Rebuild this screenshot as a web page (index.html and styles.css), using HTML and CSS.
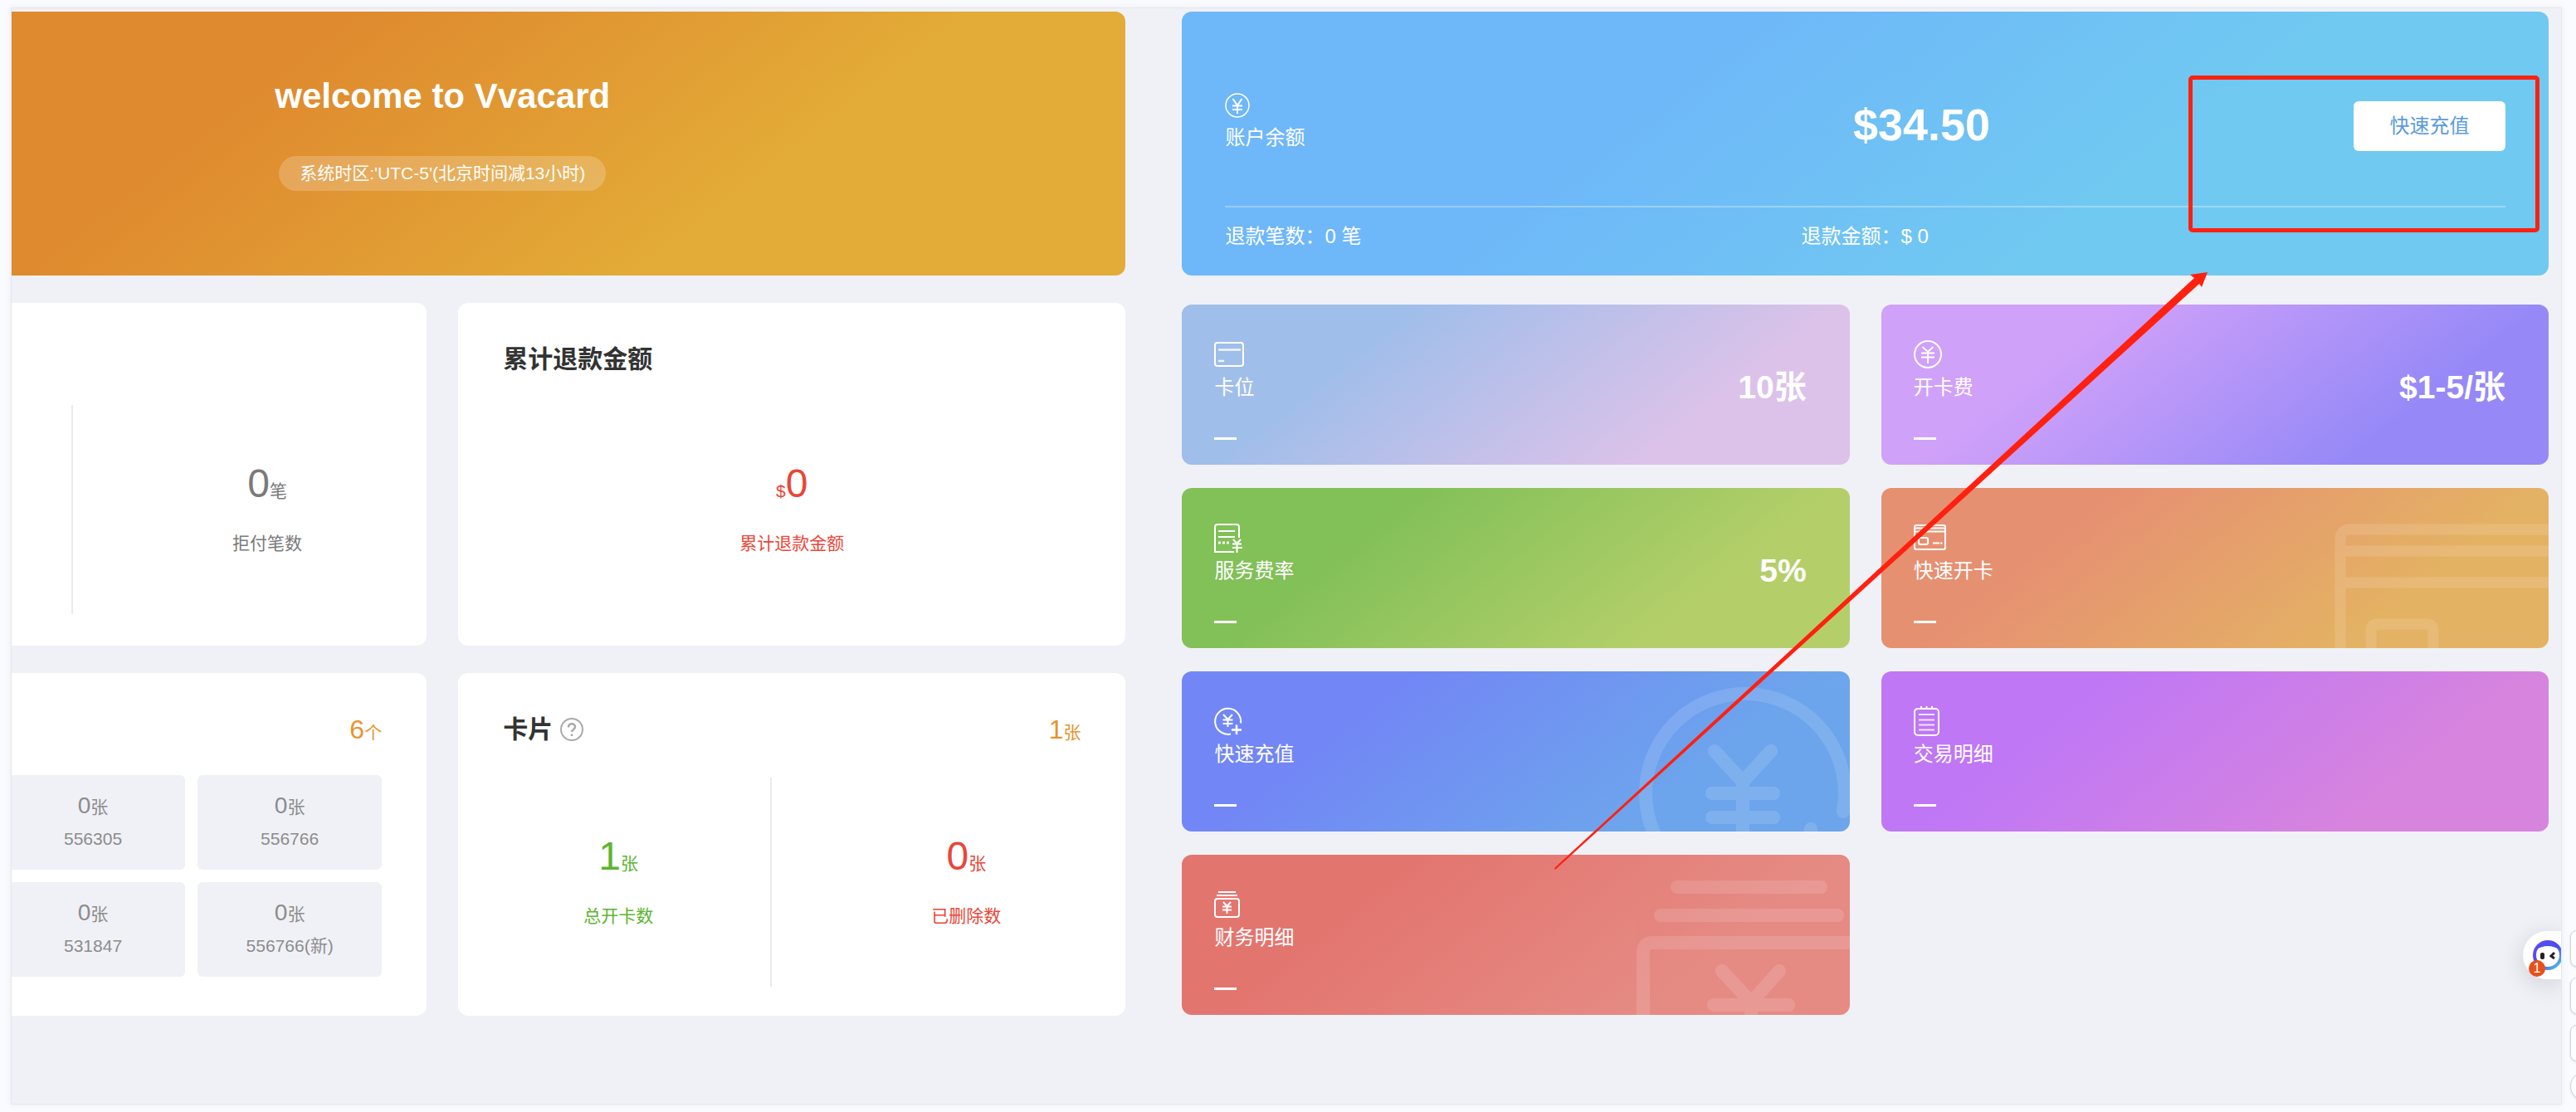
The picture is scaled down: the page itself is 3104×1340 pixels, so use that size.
FILE: index.html
```html
<!DOCTYPE html>
<html lang="zh-CN">
<head>
<meta charset="utf-8">
<title>Vvacard</title>
<link rel="stylesheet" href="styles.css">
</head>
<body>
<main class="frame">
  <section class="left">
    <header class="welcome">
      <h1>welcome to Vvacard</h1>
      <p class="zone">系统时区:'UTC-5'(北京时间减13小时)</p>
    </header>
    <div class="row">
      <article class="card cut">
        <div class="head"></div>
        <div class="stats">
          <div class="stat first"></div>
          <div class="stat second gray"><p class="num">0<small>笔</small></p><p class="cap">拒付笔数</p></div>
        </div>
      </article>
      <article class="card">
        <div class="head"><h2>累计退款金额</h2></div>
        <div class="stats single">
          <div class="stat red"><p class="num"><small>$</small>0</p><p class="cap">累计退款金额</p></div>
        </div>
      </article>
    </div>
    <div class="row">
      <article class="card cut">
        <div class="head"><span class="total">6<small>个</small></span></div>
        <div class="bins">
          <div class="bin"><p class="count">0<small>张</small></p><p>556305</p></div>
          <div class="bin"><p class="count">0<small>张</small></p><p>556766</p></div>
          <div class="bin"><p class="count">0<small>张</small></p><p>531847</p></div>
          <div class="bin"><p class="count">0<small>张</small></p><p>556766(新)</p></div>
        </div>
      </article>
      <article class="card">
        <div class="head tall">
          <h2>卡片</h2>
          <svg class="help" width="28" height="28" viewBox="0 0 28 28" fill="none" stroke="#aaa" stroke-width="2"><circle cx="14" cy="14" r="13"/><path d="M10 11.500c0-5.500 8-5.500 8-.5 0 3-4 3-4 6" stroke-width="2.500"/><path d="M14 19.500v2.500" stroke-width="2.500"/></svg>
          <span class="total">1<small>张</small></span>
        </div>
        <div class="stats">
          <div class="stat first green"><p class="num">1<small>张</small></p><p class="cap">总开卡数</p></div>
          <div class="stat second red"><p class="num">0<small>张</small></p><p class="cap">已删除数</p></div>
        </div>
      </article>
    </div>
  </section>

  <section class="right">
    <article class="balance">
      <div class="upper">
        <div class="account">
          <svg width="30" height="30" viewBox="0 0 30 30" fill="none" stroke="currentColor" stroke-width="1.500"><circle cx="15" cy="15" r="14"/><path d="M9.500 7l5.500 8 5.500-8M9 15.500h12M9 20h12M15 15v10" stroke-width="2"/></svg>
          <span>账户余额</span>
        </div>
        <strong class="amount">$34.50</strong>
        <button type="button" class="recharge">快速充值</button>
      </div>
      <div class="lower"><span>退款笔数：0 笔</span><span>退款金额：$ 0</span></div>
      <div class="mark"></div>
    </article>

    <div class="tiles">
      <article class="tile sky">
        <svg class="icon" viewBox="0 0 39 36" fill="none" stroke="currentColor"><rect x="1" y="4" width="34" height="28" rx="3" stroke-width="2"/><path d="M6 12.500h25M6 26h5" stroke-width="2.500" stroke-linecap="round" opacity=".85"/></svg>
        <span class="name">卡位</span><strong class="value">10张</strong>
      </article>
      <article class="tile violet">
        <svg class="icon" viewBox="0 0 39 36" fill="none" stroke="currentColor"><circle cx="17" cy="18" r="16" stroke-width="2"/><path d="M10.500 9l6.500 6 6.500-6M9 16.500h16M9 21.500h16M17 15v14" stroke-width="2"/></svg>
        <span class="name">开卡费</span><strong class="value">$1-5/张</strong>
      </article>
      <article class="tile lime">
        <svg class="icon" viewBox="0 0 39 36" fill="none" stroke="currentColor" stroke-width="2"><path d="M24 35H1V5q0-3 3-3h23q3 0 3 3v13"/><path d="M5 10h20M5 17h20"/><path d="M5 24h3M10 24h3M15 24h3" stroke-width="3"/><path d="M23 20l4.500 5 4.500-5M22 25.500h11M22 30h12M27.500 25v11"/></svg>
        <span class="name">服务费率</span><strong class="value">5%</strong>
      </article>
      <a class="tile amber" href="#open">
        <svg class="water" viewBox="0 0 260 193" width="260" height="193" fill="none" stroke="#fff" stroke-width="13"><path d="M9 210V62q0-12 12-12h260M15 76h260M15 114h260M46 210v-38q0-8 8-8h59q8 0 8 8v38"/></svg>
        <svg class="icon" viewBox="0 0 39 36" fill="none" stroke="currentColor" stroke-width="2"><rect x="1" y="3" width="37" height="29" rx="2"/><path d="M2 6.500h35M2 10.500h35" stroke-width="2"/><rect x="6" y="18" width="11" height="8" rx="2"/><path d="M23 24.500h8M32 24.500h2.500"/></svg>
        <span class="name">快速开卡</span>
      </a>
      <a class="tile blue" href="#recharge">
        <svg class="water" viewBox="0 0 260 193" width="260" height="193" fill="none" stroke="#fff" stroke-width="16" stroke-linecap="round" stroke-linejoin="round"><path d="M252 169A120 120 0 1 0 131 267M97 96l34 37 34-37M131 133v70M94 147h74M94 176h74M213 190v40"/></svg>
        <svg class="icon" viewBox="0 0 39 36" fill="none" stroke="currentColor" stroke-width="2"><path d="M32 20.500A15.500 15.500 0 1 0 20 33.500"/><path d="M11 10l5.500 6 5.500-6M10.500 16.500h12M10.500 21h12M16.500 16v9"/><path d="M21 28.500h12M27 22.500v11.500" stroke-width="2.500"/></svg>
        <span class="name">快速充值</span>
      </a>
      <a class="tile purple" href="#trades">
        <svg class="icon" viewBox="0 0 39 36" fill="none" stroke="currentColor" stroke-width="2"><rect x="1" y="3" width="29" height="32" rx="4"/><path d="M9 0v4M15.500 0v4M22 0v4"/><path d="M6 10h19M6 16.500h19M6 22.500h19M6 28.500h19" opacity=".8"/></svg>
        <span class="name">交易明细</span>
      </a>
      <a class="tile coral" href="#finance">
        <svg class="water" viewBox="0 0 260 193" width="260" height="193" fill="none" stroke="#fff" stroke-width="16" stroke-linecap="round" stroke-linejoin="round"><path d="M52 39h173M32 73h213M11 220V118q0-12 12-12h250M106 140l35 38 34-38M141 178v40M96 181h90"/></svg>
        <svg class="icon" viewBox="0 0 39 36" fill="none" stroke="currentColor" stroke-width="2"><path d="M5 3h21M3 7h25"/><rect x="1" y="11" width="29" height="22" rx="3"/><path d="M11 15l4.500 5 4.500-5M10 20.500h11M10 24.500h11M15.500 20v9"/></svg>
        <span class="name">财务明细</span>
      </a>
    </div>
    <svg class="arrow" width="788" height="720" viewBox="0 0 788 720"><path d="M0 718L771 7l-5-4L787 0l-7 18-3-4L1 720z" fill="#ff2010"/></svg>
  </section>

  <div class="chat">
    <svg width="36" height="36" viewBox="0 0 36 36"><defs><linearGradient id="ring" x1="0" y1="0" x2="1" y2="1"><stop offset="0" stop-color="#6a50f0"/><stop offset=".5" stop-color="#4a48f0"/><stop offset="1" stop-color="#50d0e0"/></linearGradient></defs><circle cx="18" cy="18" r="16" fill="#fff" stroke="url(#ring)" stroke-width="4"/><path d="M3 12A16 16 0 0 1 33 12Q18 2 3 12" fill="#4f4cf0"/><rect x="9" y="15" width="5" height="8" rx="2" fill="#222"/><path d="M26 15l-4 4 4 3" fill="none" stroke="#222" stroke-width="3"/></svg>
    <span class="badge">1</span>
  </div>
</main>
<aside class="rail">
  <i class="slot"></i><i class="slot"></i><i class="slot"></i><i class="slot round"></i>
</aside>
</body>
</html>
```
FILE: styles.css
```css
* { box-sizing: border-box; }
body {
  margin: 0;
  min-height: 100vh;
  padding: 10px 0 10px 14px;
  display: flex;
  overflow: hidden;
  background: #fafbff;
  color: #333;
  font: 21px/30px "Liberation Sans", "Noto Sans CJK SC", sans-serif;
}
h1, h2, p { margin: 0; }
small { font-size: 21px; line-height: 1; }
a { color: inherit; text-decoration: none; }

.frame {
  position: relative;
  flex: 1;
  display: grid;
  grid-template-columns: 1342fr 1646fr;
  column-gap: 68px;
  align-items: start;
  padding: 4px 15px 0 0;
  overflow: hidden;
  background: #f0f1f6;
  box-shadow: 0 0 0 1px #e6e7eb, 0 0 8px 2px rgba(0, 0, 0, .05);
}

.left { display: flex; flex-direction: column; gap: 33px; }
.welcome {
  min-height: 318px;
  display: flex;
  flex-direction: column;
  align-items: center;
  padding: 72px 304px 0 0;
  border-radius: 0 12px 12px 0;
  background: linear-gradient(142deg, #df8a2f 24%, #e3ab37 66%);
  color: #fff;
}
.welcome h1 { font-size: 42px; line-height: 60px; }
.zone {
  margin-top: 42px;
  padding: 0 25px;
  line-height: 42px;
  border-radius: 21px;
  background: rgba(255, 255, 255, .2);
}

.row { display: grid; grid-template-columns: 500fr 804fr; column-gap: 38px; }
.card {
  min-height: 413px;
  padding: 45px 0 0;
  overflow: hidden;
  border-radius: 12px;
  background: #fff;
}
.card.cut { border-radius: 0 12px 12px 0; }
.head {
  display: flex;
  align-items: center;
  gap: 9px;
  height: 45px;
  margin: 0 54px 33px;
}
.head.tall { margin-bottom: 36px; }
.head h2 { font-size: 30px; line-height: 45px; }
.total { margin-left: auto; font-size: 32px; color: #e6942f; }

.stats { display: flex; height: 252px; }
.stat {
  flex: 1;
  display: flex;
  flex-direction: column;
  align-items: center;
  justify-content: center;
  gap: 27px;
  padding-bottom: 6px;
}
.stat.first { flex: 0 0 376px; padding-left: 10px; }
.stat.second { padding-left: 42px; border-left: 2px solid #ebebed; }
.cut .stat.first { flex-basis: 72px; }
.num { font-size: 48px; line-height: 60px; }
.gray { color: #7a7a7a; }
.red { color: #e84738; }
.green { color: #5cb531; }

.bins {
  display: grid;
  grid-template-columns: 1fr 1fr;
  gap: 15px;
  margin: 0 54px 0 -13px;
}
.bin {
  min-height: 114px;
  padding-top: 17px;
  border-radius: 6px;
  background: #f0f1f6;
  color: #8c8c8c;
  text-align: center;
  line-height: 40px;
}
.count { font-size: 28px; }

.right {
  position: relative;
  display: flex;
  flex-direction: column;
  gap: 35px;
  color: #fff;
  font-size: 24px;
  line-height: 36px;
}
.balance {
  position: relative;
  min-height: 318px;
  padding: 0 52px;
  border-radius: 12px;
  background: linear-gradient(142deg, #6eb7f9 33%, #70c9f1 68%);
}
.upper {
  display: grid;
  grid-template-columns: 45% 290px 1fr;
  align-items: center;
  height: 236px;
  padding-top: 42px;
  border-bottom: 2px solid rgba(255, 255, 255, .3);
}
.account { display: flex; flex-direction: column; gap: 6px; padding-bottom: 8px; }
.amount { padding-bottom: 4px; font-size: 54px; line-height: 60px; text-align: center; }
.recharge {
  justify-self: end;
  width: 183px;
  height: 60px;
  border: 0;
  border-radius: 6px;
  background: #fff;
  color: #5b9bdb;
  font: inherit;
}
.lower { display: grid; grid-template-columns: 45% 1fr; padding-top: 17px; }
.mark {
  position: absolute;
  top: 77px;
  right: 11px;
  width: 423px;
  height: 189px;
  border: 5px solid #ff2010;
  border-radius: 5px;
}

.tiles { display: grid; grid-template-columns: 1fr 1fr; gap: 28px 38px; }
.tile {
  position: relative;
  display: grid;
  grid-template-columns: auto 1fr;
  grid-template-rows: 36px 44px 38px 3px;
  column-gap: 20px;
  min-height: 193px;
  padding: 42px 52px 0 39px;
  overflow: hidden;
  border-radius: 12px;
}
.tile::after { content: ""; grid-area: 4 / 1; width: 27px; background: #fff; }
.icon { grid-area: 1 / 1; width: 39px; height: 36px; }
.name { grid-area: 2 / 1; line-height: 44px; }
.value { grid-area: 2 / 2; font-size: 39px; line-height: 44px; text-align: right; }
.water { position: absolute; top: 0; right: 0; opacity: .12; }
.sky { background: linear-gradient(142deg, #a0beea 27%, #dcc2e9 76%); }
.violet { background: linear-gradient(142deg, #d0a1f9 27%, #9689f7 76%); }
.lime { background: linear-gradient(142deg, #82c058 27%, #b4cf6a 76%); }
.amber { background: linear-gradient(142deg, #e69072 27%, #e4b264 76%); }
.blue { background: linear-gradient(142deg, #7287f5 27%, #6da6ec 76%); }
.purple { background: linear-gradient(142deg, #bf77f5 27%, #d784de 76%); }
.coral { background: linear-gradient(142deg, #e3756f 27%, #e58b84 76%); }
.arrow { position: absolute; top: 314px; left: 449px; }

.chat {
  position: absolute;
  top: 1112px;
  right: 0;
  width: 46px;
  height: 58px;
  padding: 11px 0 0 12px;
  border-radius: 29px 0 0 29px;
  background: #fff;
  box-shadow: 0 6px 30px rgba(0, 0, 0, .14);
}
.chat svg { display: block; }
.badge {
  position: absolute;
  top: 35px;
  left: 7px;
  width: 20px;
  height: 20px;
  border-radius: 10px;
  background: #e8501b;
  color: #fff;
  font-size: 16px;
  line-height: 20px;
  text-align: center;
}

.rail {
  flex: 0 0 18px;
  width: 18px;
  min-width: 0;
  display: flex;
  flex-direction: column;
  gap: 13px;
  padding: 1111px 0 0 11px;
  overflow: hidden;
}
.slot {
  flex: none;
  width: 44px;
  height: 44px;
  border: 1px solid #d4d5d9;
  border-radius: 8px;
  background: #fcfdff;
  box-shadow: 0 1px 3px rgba(0, 0, 0, .12);
}
.slot.round { height: 34px; border-radius: 17px; }
```
